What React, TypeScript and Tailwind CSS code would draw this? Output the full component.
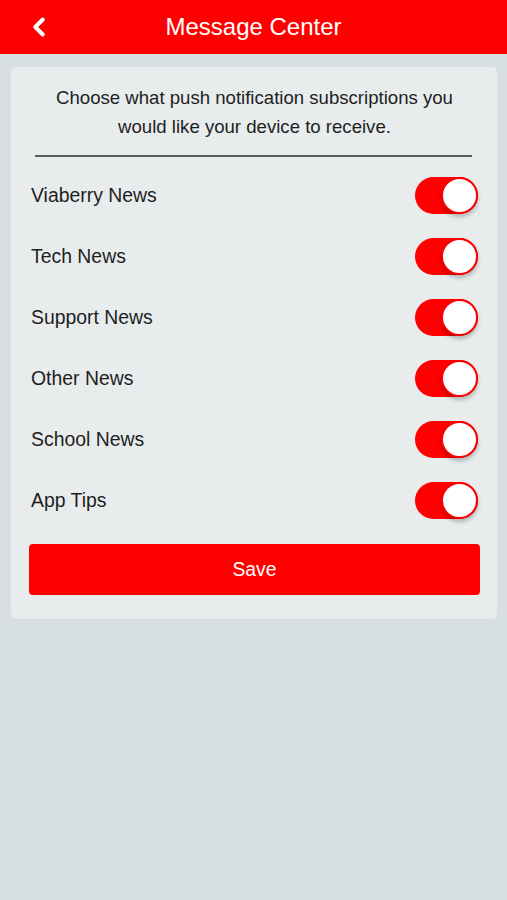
import { ChevronLeft } from "lucide-react";

const TOPICS = [
  "Viaberry News",
  "Tech News",
  "Support News",
  "Other News",
  "School News",
  "App Tips",
];

function Toggle() {
  return (
    <div className="relative w-[63px] h-[37px] rounded-full bg-[#ff0000]">
      <div className="absolute right-0 top-0 w-[37px] h-[37px] rounded-full bg-white border-2 border-[#ff0000] shadow-[0_3px_4px_rgba(0,0,0,0.25)]" />
    </div>
  );
}

export default function App() {
  return (
    <div
      className="w-[507px] h-[900px] bg-[#d8dfe1]"
      style={{ fontFamily: '"Liberation Sans", Arial, sans-serif' }}
    >
      <header className="relative h-[54px] bg-[#ff0000] flex items-center justify-center">
        <ChevronLeft
          className="absolute left-[24px] top-[12px] w-[30px] h-[30px] text-white"
          strokeWidth={3.2}
        />
        <h1 className="text-white text-[24px] leading-none">Message Center</h1>
      </header>

      <div className="pl-[11px] pr-[10px] pt-[13px]">
        <div className="bg-[#e8eced] rounded-[5px] pt-[16px] pb-[24px] pl-[18px] pr-[17px]">
          <p className="text-center text-[#1e1e1e] text-[18.6px] leading-[29px] px-[20px]">
            Choose what push notification subscriptions you would like your
            device to receive.
          </p>
          <div className="ml-[6px] mr-[8px] mt-[14px] h-[2px] bg-[#5a5d5f]" />

          <div className="mt-[8px]">
            {TOPICS.map((t) => (
              <div
                key={t}
                className="h-[61px] flex items-center justify-between pr-[2px]"
              >
                <span className="pl-[2px] text-[19.4px] text-[#1e1e1e]">{t}</span>
                <Toggle />
              </div>
            ))}
          </div>

          <button className="mt-[13px] w-full h-[51px] rounded-[4px] bg-[#ff0000] text-white text-[19.4px]">
            Save
          </button>
        </div>
      </div>
    </div>
  );
}
